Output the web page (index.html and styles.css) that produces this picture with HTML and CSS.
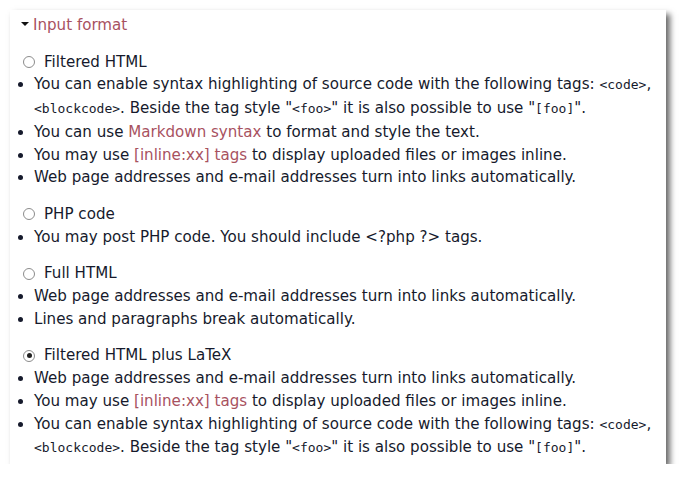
FILE: index.html
```html
<!DOCTYPE html>
<html>
<head>
<meta name="viewport" content="width=device-width, initial-scale=1">
<link rel="stylesheet" href="styles.css">
</head>
<body>

<fieldset class="panel">
  <legend class="panel-title"><span class="caret"></span><a href="#">Input format</a></legend>

  <div class="format">
    <label class="choice"><input type="radio" name="format" value="1"> Filtered HTML</label>
    <ul class="tips">
      <li>You can enable syntax highlighting of source code with the following tags: <code>&lt;code&gt;</code>, <code>&lt;blockcode&gt;</code>. Beside the tag style "<code>&lt;foo&gt;</code>" it is also possible to use "<code>[foo]</code>".</li>
      <li>You can use <a href="#">Markdown syntax</a> to format and style the text.</li>
      <li>You may use <a href="#">[inline:xx] tags</a> to display uploaded files or images inline.</li>
      <li>Web page addresses and e-mail addresses turn into links automatically.</li>
    </ul>
  </div>

  <div class="format">
    <label class="choice"><input type="radio" name="format" value="2"> PHP code</label>
    <ul class="tips">
      <li>You may post PHP code. You should include &lt;?php ?&gt; tags.</li>
    </ul>
  </div>

  <div class="format">
    <label class="choice"><input type="radio" name="format" value="3"> Full HTML</label>
    <ul class="tips">
      <li>Web page addresses and e-mail addresses turn into links automatically.</li>
      <li>Lines and paragraphs break automatically.</li>
    </ul>
  </div>

  <div class="format">
    <label class="choice"><input type="radio" name="format" value="4" checked> Filtered HTML plus LaTeX</label>
    <ul class="tips">
      <li>Web page addresses and e-mail addresses turn into links automatically.</li>
      <li>You may use <a href="#">[inline:xx] tags</a> to display uploaded files or images inline.</li>
      <li>You can enable syntax highlighting of source code with the following tags: <code>&lt;code&gt;</code>, <code>&lt;blockcode&gt;</code>. Beside the tag style "<code>&lt;foo&gt;</code>" it is also possible to use "<code>[foo]</code>".</li>
    </ul>
  </div>
</fieldset>

</body>
</html>
```

FILE: styles.css
```css
* {
  box-sizing: border-box;
}

body {
  margin: 0;
  padding: 10px 16px 0 10px;
  background-color: #fff;
  font-family: "DejaVu Sans", Verdana, sans-serif;
  font-size: 15.1px;
  line-height: 22.7px;
  color: #161a2c;
}

a {
  color: #a8525f;
  text-decoration: none;
}

code {
  font-family: "DejaVu Sans Mono", monospace;
  font-size: 13px;
}

/* the white sheet with its drop shadow */
.panel {
  margin: 0;
  height: 454px;
  padding: 4px 11px 0 12px;
  border: none;
  background-color: #fff;
  box-shadow: 4px 4px 6px rgba(0, 0, 0, 0.6);
}

.panel-title {
  float: left;
  width: 100%;
  padding: 0;
  margin-bottom: 14px;
}

/*small down arrow before the title:*/
.caret {
  display: inline-block;
  width: 0;
  height: 0;
  margin: 0 4px 3px -1px;
  border: 4px solid transparent;
  border-top-color: #111;
  border-bottom: none;
  vertical-align: middle;
}

.format {
  clear: both;
  margin-bottom: 14px;
}

.choice {
  display: flex;
  align-items: center;
  gap: 9px;
}

.choice input {
  appearance: none;
  margin: 0 0 0 1px;
  width: 12px;
  height: 12px;
  border: 1.5px solid #8c8c8c;
  border-radius: 50%;
  background-color: #fff;
  display: grid;
  place-items: center;
}

.choice input:checked::after {
  content: "";
  width: 5px;
  height: 5px;
  border-radius: 50%;
  background-color: #222;
}

.tips {
  margin: 0;
  padding-left: 12px;
}
```
